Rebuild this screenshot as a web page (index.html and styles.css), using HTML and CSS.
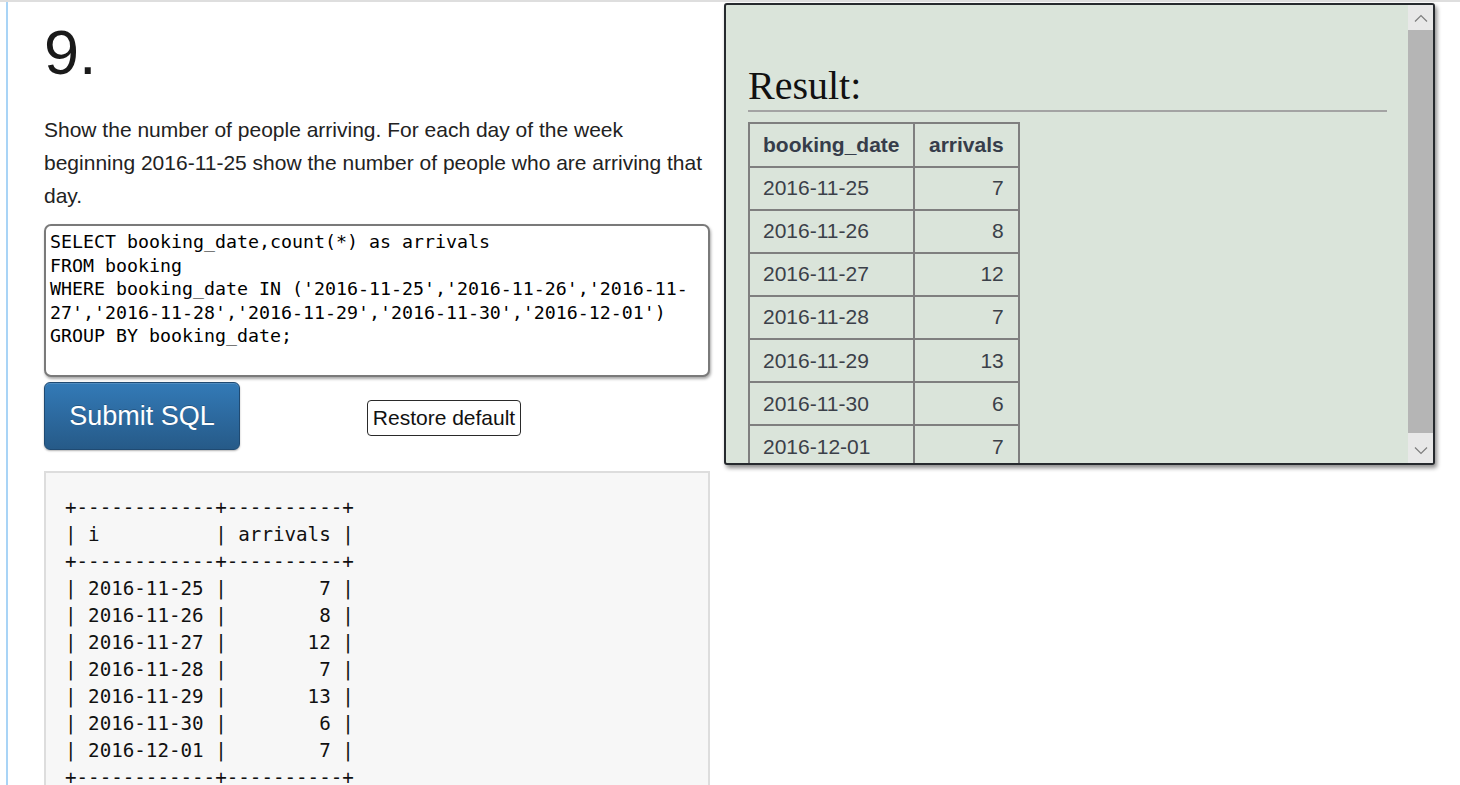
FILE: index.html
```html
<!DOCTYPE html>
<html lang="en">
<head>
<meta charset="utf-8">
<title>SQL Zoo 9</title>
<link rel="stylesheet" href="styles.css">
</head>
<body>
<div class="page">
  <div class="rail">
    <div class="question">
      <h1 class="qnum">9.</h1>
      <p class="qtext">Show the number of people arriving. For each day of the week beginning 2016-11-25 show the number of people who are arriving that day.</p>
      <textarea class="sql" spellcheck="false">SELECT booking_date,count(*) as arrivals
FROM booking
WHERE booking_date IN ('2016-11-25','2016-11-26','2016-11-
27','2016-11-28','2016-11-29','2016-11-30','2016-12-01')
GROUP BY booking_date;</textarea>
      <div class="actions">
        <button class="btn-submit">Submit SQL</button>
        <button class="btn-restore">Restore default</button>
      </div>
      <pre class="ascii">+------------+----------+
| i          | arrivals |
+------------+----------+
| 2016-11-25 |        7 |
| 2016-11-26 |        8 |
| 2016-11-27 |       12 |
| 2016-11-28 |        7 |
| 2016-11-29 |       13 |
| 2016-11-30 |        6 |
| 2016-12-01 |        7 |
+------------+----------+</pre>
    </div>
    <div class="result-panel">
      <div class="result-body">
        <h2 class="result-title">Result:</h2>
        <table class="result-table">
          <thead>
            <tr><th>booking_date</th><th class="num-head">arrivals</th></tr>
          </thead>
          <tbody>
            <tr><td>2016-11-25</td><td class="num">7</td></tr>
            <tr><td>2016-11-26</td><td class="num">8</td></tr>
            <tr><td>2016-11-27</td><td class="num">12</td></tr>
            <tr><td>2016-11-28</td><td class="num">7</td></tr>
            <tr><td>2016-11-29</td><td class="num">13</td></tr>
            <tr><td>2016-11-30</td><td class="num">6</td></tr>
            <tr><td>2016-12-01</td><td class="num">7</td></tr>
          </tbody>
        </table>
      </div>
      <div class="scrollbar">
        <div class="sb-btn">
          <svg width="14" height="8" viewBox="0 0 14 8"><path d="M1 7.5 L7 1.5 L13 7.5" fill="none" stroke="#7d7d7d" stroke-width="1.2"/></svg>
        </div>
        <div class="sb-thumb"></div>
        <div class="sb-track"></div>
        <div class="sb-btn">
          <svg width="14" height="8" viewBox="0 0 14 8"><path d="M1 0.5 L7 6.5 L13 0.5" fill="none" stroke="#7d7d7d" stroke-width="1.2"/></svg>
        </div>
      </div>
    </div>
  </div>
</div>
</body>
</html>
```
FILE: styles.css
```css
html, body {
  margin: 0;
  padding: 0;
  background: #fff;
}

body {
  font-family: "Liberation Sans", Arial, sans-serif;
  color: #222;
  overflow: hidden;
  height: 785px;
}

.page {
  border-top: 2px solid #dedede;
}

.rail {
  margin-left: 6px;
  border-left: 2px solid #a9d4f6;
  padding-left: 36px;
  display: flex;
  align-items: flex-start;
  gap: 14px;
  min-height: 800px;
}

.question {
  width: 666px;
  display: flex;
  flex-direction: column;
  flex-shrink: 0;
}

.qnum {
  font-size: 63px;
  line-height: 63px;
  font-weight: normal;
  margin: 19px 0 0;
  color: #1a1a1a;
}

.qtext {
  font-size: 21px;
  line-height: 33px;
  margin: 29px 0 0;
  color: #222;
}

.sql {
  margin-top: 12px;
  height: 153px;
  box-sizing: border-box;
  width: 666px;
  border: 2px solid #7a7a7a;
  border-radius: 7px;
  box-shadow: 1px 2px 3px rgba(0, 0, 0, 0.35);
  padding: 4px;
  font-family: "DejaVu Sans Mono", "Liberation Mono", monospace;
  font-size: 18.27px;
  line-height: 23.5px;
  color: #000;
  resize: none;
  overflow: hidden;
  white-space: pre;
  outline: none;
}

.actions {
  margin-top: 5px;
  display: flex;
  align-items: center;
}

.btn-submit {
  width: 196px;
  height: 68px;
  box-sizing: border-box;
  border: 1px solid #1f4a72;
  border-radius: 6px;
  background: linear-gradient(to bottom, #337ab7 0%, #265a88 100%);
  box-shadow: inset 0 1px 0 rgba(255, 255, 255, 0.15), 0 1px 2px rgba(0, 0, 0, 0.3);
  color: #fff;
  font-family: "Liberation Sans", Arial, sans-serif;
  font-size: 27px;
  text-shadow: 0 -1px 0 rgba(0, 0, 0, 0.2);
  padding: 0;
}

.btn-restore {
  margin-left: 127px;
  margin-top: 4px;
  height: 36px;
  width: 154px;
  box-sizing: border-box;
  background: #fff;
  border: 1.5px solid #2a2a2a;
  border-radius: 4px;
  font-family: "Liberation Sans", Arial, sans-serif;
  font-size: 21px;
  color: #111;
  padding: 0;
}

.ascii {
  margin: 21px 0 0;
  background: #f7f7f7;
  border: 2px solid #dddddd;
  padding: 21px 19px;
  font-family: "DejaVu Sans Mono", "Liberation Mono", monospace;
  font-size: 19.2px;
  line-height: 27px;
  color: #111;
}

.result-panel {
  margin-top: 1px;
  width: 711px;
  height: 462px;
  box-sizing: border-box;
  flex-shrink: 0;
  background: #dae4da;
  border: 2px solid #262a2e;
  border-radius: 3px;
  box-shadow: 2px 3px 4px rgba(0, 0, 0, 0.45);
  display: flex;
  overflow: hidden;
}

.result-body {
  flex: 1;
  overflow: hidden;
  padding: 0 21px 0 22px;
}

.result-title {
  font-family: "Liberation Serif", "Times New Roman", serif;
  font-weight: normal;
  font-size: 40px;
  line-height: 46px;
  color: #111;
  margin: 58px 0 0;
  padding-bottom: 1px;
  border-bottom: 2px solid #a3a3a3;
}

.result-table {
  margin-top: 10px;
  border-collapse: collapse;
  border: 2px solid #7f7f7f;
  font-family: "Liberation Sans", Arial, sans-serif;
  font-size: 21px;
}

.result-table th,
.result-table td {
  border: 2px solid #7f7f7f;
  padding: 8.5px 13px;
  line-height: 24.1px;
  color: #3b4049;
  text-align: left;
  font-weight: normal;
}

.result-table th {
  font-weight: bold;
  padding: 8.8px 13px;
  color: #363d4a;
}

.result-table th.num-head {
  padding: 8.8px 14.5px;
}

.result-table td.num {
  text-align: right;
  padding: 8.5px 14.5px;
}

.scrollbar {
  width: 25px;
  flex-shrink: 0;
  background: #e8e8e8;
  display: flex;
  flex-direction: column;
}

.sb-btn {
  height: 25px;
  display: flex;
  align-items: center;
  justify-content: center;
  flex-shrink: 0;
}

.sb-thumb {
  height: 403px;
  background: #b5b5b5;
  flex-shrink: 0;
}

.sb-track {
  flex: 1;
}
```
